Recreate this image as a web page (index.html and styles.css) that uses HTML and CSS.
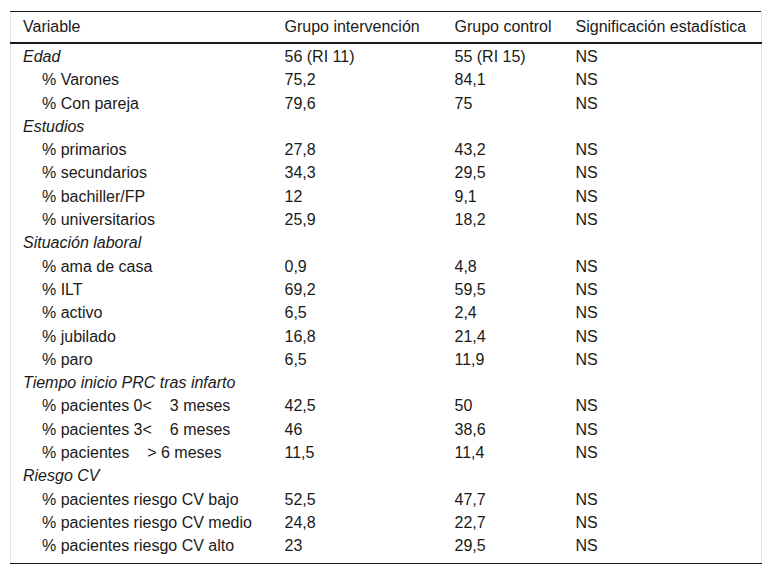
FILE: index.html
```html
<!DOCTYPE html>
<html lang="es">
<head>
<meta charset="utf-8">
<title>Tabla</title>
<link rel="stylesheet" href="styles.css">
</head>
<body>
<div class="wrap">
<table class="data">
  <colgroup>
    <col class="c1"><col class="c2"><col class="c3"><col class="c4">
  </colgroup>
  <thead>
    <tr><th>Variable</th><th>Grupo intervención</th><th>Grupo control</th><th>Significación estadística</th></tr>
  </thead>
  <tbody>
    <tr><td class="grp">Edad</td><td>56 (RI 11)</td><td>55 (RI 15)</td><td>NS</td></tr>
    <tr><td class="sub">% Varones</td><td>75,2</td><td>84,1</td><td>NS</td></tr>
    <tr><td class="sub">% Con pareja</td><td>79,6</td><td>75</td><td>NS</td></tr>
    <tr><td class="grp">Estudios</td><td></td><td></td><td></td></tr>
    <tr><td class="sub">% primarios</td><td>27,8</td><td>43,2</td><td>NS</td></tr>
    <tr><td class="sub">% secundarios</td><td>34,3</td><td>29,5</td><td>NS</td></tr>
    <tr><td class="sub">% bachiller/FP</td><td>12</td><td>9,1</td><td>NS</td></tr>
    <tr><td class="sub">% universitarios</td><td>25,9</td><td>18,2</td><td>NS</td></tr>
    <tr><td class="grp">Situación laboral</td><td></td><td></td><td></td></tr>
    <tr><td class="sub">% ama de casa</td><td>0,9</td><td>4,8</td><td>NS</td></tr>
    <tr><td class="sub">% ILT</td><td>69,2</td><td>59,5</td><td>NS</td></tr>
    <tr><td class="sub">% activo</td><td>6,5</td><td>2,4</td><td>NS</td></tr>
    <tr><td class="sub">% jubilado</td><td>16,8</td><td>21,4</td><td>NS</td></tr>
    <tr><td class="sub">% paro</td><td>6,5</td><td>11,9</td><td>NS</td></tr>
    <tr><td class="grp">Tiempo inicio PRC tras infarto</td><td></td><td></td><td></td></tr>
    <tr><td class="sub">% pacientes 0&lt;<span class="gap"></span>3 meses</td><td>42,5</td><td>50</td><td>NS</td></tr>
    <tr><td class="sub">% pacientes 3&lt;<span class="gap"></span>6 meses</td><td>46</td><td>38,6</td><td>NS</td></tr>
    <tr><td class="sub">% pacientes<span class="gap"></span>&gt; 6 meses</td><td>11,5</td><td>11,4</td><td>NS</td></tr>
    <tr><td class="grp">Riesgo CV</td><td></td><td></td><td></td></tr>
    <tr><td class="sub">% pacientes riesgo CV bajo</td><td>52,5</td><td>47,7</td><td>NS</td></tr>
    <tr><td class="sub">% pacientes riesgo CV medio</td><td>24,8</td><td>22,7</td><td>NS</td></tr>
    <tr class="last"><td class="sub">% pacientes riesgo CV alto</td><td>23</td><td>29,5</td><td>NS</td></tr>
  </tbody>
</table>
</div>
</body>
</html>
```
FILE: styles.css
```css
html, body {
  margin: 0;
  padding: 0;
  background: #fff;
}
.wrap {
  padding: 11px 10px;
}
.data {
  width: 751px;
  border-collapse: collapse;
  table-layout: fixed;
  font-family: "Liberation Sans", Arial, sans-serif;
  font-size: 16px;
  color: #1a1a1a;
  border-left: 1px solid #e4e4e4;
  border-right: 1px solid #e4e4e4;
  border-top: 1px solid #1a1a1a;
  border-bottom: 1px solid #1a1a1a;
}
.c1 { width: 262px; }
.c2 { width: 170px; }
.c3 { width: 121px; }
.c4 { width: 198px; }
.data th {
  font-weight: normal;
  text-align: left;
  padding: 6px 12px 7px;
  line-height: 17px;
  border-bottom: 2px solid #1a1a1a;
  white-space: nowrap;
}
.data td {
  padding: 4px 12px 2.3px;
  line-height: 17px;
  text-align: left;
  vertical-align: top;
  white-space: nowrap;
}
.data td.grp {
  font-style: italic;
}
.data td.sub {
  padding-left: 31px;
}
.gap {
  display: inline-block;
  width: 18px;
}
.data tr.last td {
  padding-bottom: 9px;
}
```
